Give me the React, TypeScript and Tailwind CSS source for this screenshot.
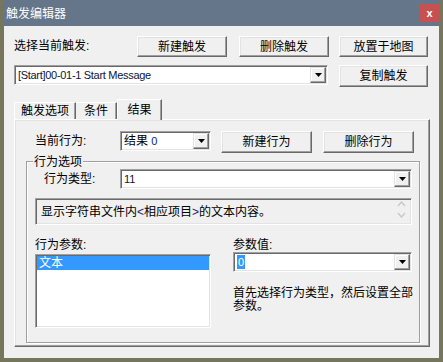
import type { ReactNode } from 'react'

function Btn({ className, children }: { className: string; children: ReactNode }) {
  return (
    <div
      className={`flex items-center justify-center bg-[#f0f0f0] border border-t-white border-l-white border-r-[#696969] border-b-[#696969] shadow-[inset_-1px_-1px_0_#a0a0a0,inset_1px_1px_0_#e3e3e3] ${className}`}
    >
      {children}
    </div>
  )
}

function DropArrow() {
  return (
    <div className="w-[16px] self-stretch my-[1px] mr-[1px] flex items-center justify-center bg-[#f0f0f0] border border-t-[#e3e3e3] border-l-[#e3e3e3] border-r-[#696969] border-b-[#696969] shadow-[inset_-1px_-1px_0_#a0a0a0,inset_1px_1px_0_white]">
      <svg width="7" height="4" viewBox="0 0 7 4">
        <path d="M0 0h7L3.5 4z" fill="#000" />
      </svg>
    </div>
  )
}

function Combo({ className, children }: { className: string; children: ReactNode }) {
  return (
    <div
      className={`flex items-stretch bg-white border border-t-[#a0a0a0] border-l-[#a0a0a0] border-r-white border-b-white shadow-[inset_1px_1px_0_#696969,inset_-1px_-1px_0_#e3e3e3] ${className}`}
    >
      <div className="flex-1 flex items-center pl-[3px] overflow-hidden whitespace-nowrap">{children}</div>
      <DropArrow />
    </div>
  )
}

export default function App() {
  return (
    <div className="w-[443px] h-[362px] bg-[#75765c] pl-[4px] font-['Liberation_Sans','Noto_Sans_CJK_SC',sans-serif] text-[12px] leading-[14px] text-black">
      <div className="w-[435px] h-[358px] flex flex-col bg-[#f0f0f0]">
        {/* title bar */}
        <div className="h-[26px] shrink-0 bg-[#66768a] flex items-start">
          <span className="pt-[7px] pl-[2px] text-white">触发编辑器</span>
          <div className="ml-auto mt-[4px] w-[19px] h-[18px] bg-[#c75050] flex items-center justify-center text-white text-[11px] font-bold leading-none">
            x
          </div>
        </div>

        <div className="px-[10px] pt-[10px]">
          <div className="flex h-[21px]">
            <span className="w-[123px] pt-[3px]">选择当前触发:</span>
            <Btn className="w-[90px] h-[21px]">新建触发</Btn>
            <Btn className="ml-[12px] w-[90px] h-[21px]">删除触发</Btn>
            <Btn className="ml-[10px] w-[89px] h-[21px]">放置于地图</Btn>
          </div>

          <div className="mt-[8px] flex items-start">
            <Combo className="w-[314px] h-[20px]">
              <span className="text-[11px] tracking-[-0.3px] text-[#0e1433]">[Start]00-01-1 Start Message</span>
            </Combo>
            <Btn className="ml-[11px] w-[89px] h-[22px]">复制触发</Btn>
          </div>

          {/* tabs */}
          <div className="mt-[12px] h-[20px] flex items-end">
            <div className="w-[62px] h-[17px] flex items-center justify-center border-t border-l border-r border-t-white border-l-white border-r-[#696969] shadow-[inset_-1px_0_0_#a0a0a0]">
              触发选项
            </div>
            <div className="w-[41px] h-[17px] flex items-center justify-center border-t border-r border-t-white border-r-[#696969] shadow-[inset_-1px_0_0_#a0a0a0]">
              条件
            </div>
            <div className="relative z-10 -mb-[1px] w-[45px] h-[21px] flex items-start justify-center pt-[3px] bg-[#f0f0f0] border-t border-l border-r border-t-white border-l-white border-r-[#696969] shadow-[inset_-1px_0_0_#a0a0a0]">
              结果
            </div>
          </div>

          {/* tab panel */}
          <div className="w-[416px] h-[228px] border border-t-white border-l-white border-r-[#696969] border-b-[#696969] shadow-[inset_-1px_-1px_0_#a0a0a0,inset_1px_1px_0_#e3e3e3] pl-[11px] pt-[11px]">
            <div className="flex items-start pl-[9px]">
              <span className="w-[85px] pt-[3px]">当前行为:</span>
              <Combo className="w-[91px] h-[20px]">
                <span>
                  结果 <span className="text-[11px] text-[#0b1f6e]">0</span>
                </span>
              </Combo>
              <Btn className="ml-[10px] w-[91px] h-[22px]">新建行为</Btn>
              <Btn className="ml-[11px] w-[91px] h-[22px]">删除行为</Btn>
            </div>

            {/* group box */}
            <div className="relative mt-[8px] w-[394px] h-[182px] border border-[#a0a0a0] shadow-[inset_1px_1px_0_white,1px_1px_0_white] pl-[8px] pt-[7px]">
              <span className="absolute left-[6px] -top-[7px] px-[1px] bg-[#f0f0f0]">行为选项</span>

              <div className="flex items-start">
                <span className="w-[85px] pl-[9px] pt-[3px]">行为类型:</span>
                <Combo className="w-[292px] h-[20px]">
                  <span className="text-[11px] text-[#0e1433]">11</span>
                </Combo>
              </div>

              <div className="mt-[9px] w-[377px] h-[27px] flex items-start border border-t-[#a0a0a0] border-l-[#a0a0a0] border-r-white border-b-white shadow-[inset_1px_1px_0_#696969,inset_-1px_-1px_0_#e3e3e3]">
                <span className="flex-1 pl-[5px] pt-[6px]">
                  显示字符串文件内<span className="text-[#2a1a6a]">&lt;</span>相应项目<span className="text-[#2a1a6a]">&gt;</span>的文本内容。
                </span>
                <div className="w-[16px] mr-[2px] pt-[2px] flex flex-col items-center gap-[5px]">
                  <svg width="9" height="6" viewBox="0 0 9 6">
                    <path d="M1 5l3.5-4L8 5" stroke="#c8c8c8" strokeWidth="1.4" fill="none" />
                  </svg>
                  <svg width="9" height="6" viewBox="0 0 9 6">
                    <path d="M1 1l3.5 4L8 1" stroke="#c8c8c8" strokeWidth="1.4" fill="none" />
                  </svg>
                </div>
              </div>

              <div className="mt-[13px] flex items-start">
                <div className="w-[198px] flex flex-col">
                  <span>行为参数:</span>
                  <div className="mt-[2px] w-[176px] h-[74px] bg-white border border-t-[#a0a0a0] border-l-[#a0a0a0] border-r-white border-b-white shadow-[inset_1px_1px_0_#696969,inset_-1px_-1px_0_#e3e3e3] p-[1px]">
                    <div className="h-[14px] bg-[#3399ff] text-white pl-[2px]">文本</div>
                  </div>
                </div>
                <div className="flex flex-col">
                  <span>参数值:</span>
                  <Combo className="w-[179px] h-[20px]">
                    <span className="text-[11px] bg-[#3399ff] text-white px-[1px]">0</span>
                  </Combo>
                  <p className="mt-[15px] w-[182px] leading-[13px]">首先选择行为类型，然后设置全部参数。</p>
                </div>
              </div>
            </div>
          </div>
        </div>
      </div>
    </div>
  )
}
